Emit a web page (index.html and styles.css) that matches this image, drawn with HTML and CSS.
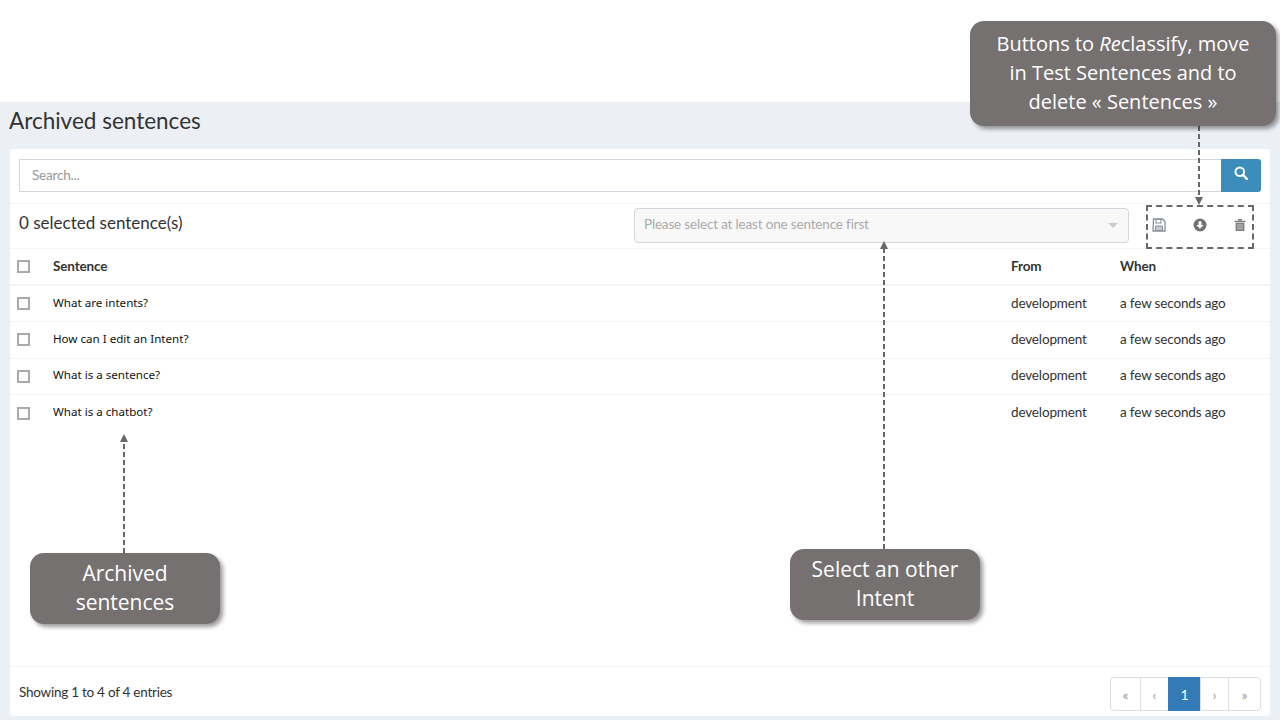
FILE: index.html
```html
<!DOCTYPE html>
<html lang="en">
  <head>
    <meta charset="UTF-8" />
    <title>Archived sentences</title>
    <link rel="stylesheet" href="styles.css">
  </head>
  <body>
    <div class="content">
      <h1>Archived sentences</h1>
      <div class="box">
        <div class="search-row">
          <input class="search-input" type="text" placeholder="Search..." />
          <button class="search-btn" type="button" aria-label="Search">
            <svg width="14" height="14" viewBox="0 0 14 14">
              <circle cx="5.8" cy="5.8" r="4.3" fill="none" stroke="#fff" stroke-width="2" />
              <path d="M9 9l4 4" stroke="#fff" stroke-width="2.4" stroke-linecap="round" />
            </svg>
          </button>
        </div>

        <div class="toolbar">
          <div class="selected-count">0 selected sentence(s)</div>
          <div class="intent-select">
            <span class="intent-text">Please select at least one sentence first</span>
            <i class="caret"></i>
          </div>
          <div class="actions">
            <svg width="14" height="14" viewBox="0 0 14 14">
              <path d="M1.5 1h9L13 3.5V13H1z" fill="none" stroke="#8a8f96" stroke-width="1.3" />
              <path d="M4 1.5h5v3.5H4z" fill="none" stroke="#8a8f96" stroke-width="1.1" />
              <path d="M3.5 8h7v4.5h-7z" fill="#c3cad6" stroke="#8a8f96" stroke-width="1" />
            </svg>
            <svg width="14" height="14" viewBox="0 0 14 14">
              <circle cx="7" cy="7" r="6.5" fill="#6f7275" />
              <path d="M5.6 3.2h2.8v3.7h2.2L7 10.8 3.4 6.9h2.2z" fill="#fff" />
            </svg>
            <svg width="14" height="14" viewBox="0 0 14 14">
              <path d="M1.5 2.8h11v1.4h-11zM5 1h4v1.5H5z" fill="#7d7f80" />
              <path d="M2.6 4.8h8.8V13H2.6z" fill="#7d7f80" />
              <path d="M5 6v5.8M7 6v5.8M9 6v5.8" stroke="#d8d4cc" stroke-width="0.9" />
            </svg>
          </div>
        </div>

        <table class="sentences">
          <thead>
            <tr>
              <th class="col-check"><i class="check"></i></th>
              <th class="col-sentence">Sentence</th>
              <th class="col-from">From</th>
              <th class="col-when">When</th>
            </tr>
          </thead>
          <tbody>
            <tr>
              <td><i class="check"></i></td>
              <td class="sentence">What are intents?</td>
              <td>development</td>
              <td>a few seconds ago</td>
            </tr>
            <tr>
              <td><i class="check"></i></td>
              <td class="sentence">How can I edit an Intent?</td>
              <td>development</td>
              <td>a few seconds ago</td>
            </tr>
            <tr>
              <td><i class="check"></i></td>
              <td class="sentence">What is a sentence?</td>
              <td>development</td>
              <td>a few seconds ago</td>
            </tr>
            <tr>
              <td><i class="check"></i></td>
              <td class="sentence">What is a chatbot?</td>
              <td>development</td>
              <td>a few seconds ago</td>
            </tr>
          </tbody>
        </table>

        <div class="box-footer">
          <div class="entries">Showing 1 to 4 of 4 entries</div>
          <ul class="pagination">
            <li>«</li>
            <li>‹</li>
            <li class="active">1</li>
            <li>›</li>
            <li>»</li>
          </ul>
        </div>
      </div>
    </div>

    <!-- annotations drawn over the page -->
    <svg class="connectors" width="1280" height="720">
      <path class="dash" d="M1199 126V198" />
      <path class="head" d="M1195 197h8l-4 8z" />
      <path class="dash" d="M884 549V248" />
      <path class="head" d="M880 249h8l-4-8z" />
      <path class="dash" d="M124 553V441" />
      <path class="head" d="M120 442h8l-4-8z" />
    </svg>
    <div class="dashed-frame"></div>
    <div class="callout callout-actions">Buttons to <em>Re</em>classify, move<br>in Test Sentences and to<br>delete « Sentences »</div>
    <div class="callout callout-intent">Select an other<br>Intent</div>
    <div class="callout callout-archived">Archived<br>sentences</div>
  </body>
</html>
```

FILE: styles.css
```css
html,
body {
  margin: 0;
  padding: 0;
  height: 720px;
  overflow: hidden;
  background-color: #fff;
}

body {
  font-family: Lato, "Liberation Sans", sans-serif;
  color: #333;
  position: relative;
}

.content {
  margin-top: 102px;
  height: 618px;
  background-color: #ecf0f5;
  padding: 0 10px;
  box-sizing: border-box;
}

h1 {
  margin: 0 0 0 -1px;
  height: 47px;
  line-height: 37px;
  font-size: 22.5px;
  font-weight: 400;
}

.box {
  background-color: #fff;
  height: 567px;
  border-radius: 3px;
  display: flex;
  flex-direction: column;
}

.search-row {
  display: flex;
  padding: 10px 9px 11px;
  border-bottom: 1px solid #f4f4f4;
}

.search-input {
  flex: 1;
  height: 33px;
  box-sizing: border-box;
  border: 1px solid #d2d6de;
  border-right: none;
  padding: 0 12px 2px;
  font-family: inherit;
  font-size: 13.5px;
  letter-spacing: -0.2px;
}

.search-input::placeholder {
  color: #999;
}

.search-btn {
  width: 40px;
  height: 33px;
  border: none;
  padding: 0 0 2px;
  background-color: #3c8dbc;
  border-radius: 0 3px 3px 0;
}

.toolbar {
  display: flex;
  align-items: center;
  height: 42px;
  padding: 0 0 2px 9px;
  border-bottom: 1px solid #f4f4f4;
}

.selected-count {
  width: 615px;
  font-size: 17px;
  padding-bottom: 6px;
}

.intent-select {
  width: 495px;
  height: 35px;
  box-sizing: border-box;
  border: 1px solid #d2d6de;
  border-radius: 4px;
  background-color: #f8f8f8;
  color: #aaa;
  font-size: 13.5px;
  padding: 0 10px 0 9px;
  display: flex;
  align-items: center;
  justify-content: space-between;
}

.intent-text {
  letter-spacing: -0.17px;
  padding-bottom: 2px;
}

.caret {
  width: 0;
  height: 0;
  border-left: 5px solid transparent;
  border-right: 5px solid transparent;
  border-top: 5px solid #ccc;
}

.actions {
  display: flex;
  justify-content: space-between;
  width: 95px;
  margin-left: 23px;
}

.sentences {
  width: 100%;
  border-collapse: collapse;
  table-layout: fixed;
  font-size: 13.5px;
  letter-spacing: -0.15px;
}

.sentences th {
  height: 36px;
  padding: 0 0 2px;
  box-sizing: border-box;
  text-align: left;
  font-weight: 700;
  font-size: 13.5px;
  border-bottom: 2px solid #f4f4f4;
}

.sentences td {
  height: 36.6px;
  box-sizing: border-box;
  padding: 0 0 2px;
  border-bottom: 1px solid #f4f4f4;
}

.sentences tbody tr:last-child td {
  border-bottom: none;
}

.col-check {
  width: 43px;
}

.col-sentence {
  width: 958px;
}

.col-from {
  width: 109px;
}

.check {
  display: block;
  width: 9px;
  height: 9px;
  margin: 2px 0 0 7px;
  border: 2px solid #aaa;
}

.sentences .sentence {
  font-family: "Noto Sans", "DejaVu Sans", sans-serif;
  font-size: 11.6px;
  letter-spacing: 0;
  color: #111;
  padding-bottom: 3px;
}

.box-footer {
  margin-top: auto;
  height: 49px;
  border-top: 1px solid #f4f4f4;
  padding: 0 9px;
  display: flex;
  align-items: flex-start;
  justify-content: space-between;
}

.entries {
  font-size: 13.5px;
  letter-spacing: -0.25px;
  margin-top: 17px;
}

.pagination {
  list-style: none;
  margin: 10px 0 0;
  padding: 0;
  display: flex;
  height: 34px;
  font-size: 14px;
}

.pagination li {
  width: 29px;
  box-sizing: border-box;
  border: 1px solid #ddd;
  margin-left: -1px;
  color: #999;
  display: flex;
  align-items: center;
  justify-content: center;
}

.pagination li:first-child {
  width: 31px;
  border-radius: 4px 0 0 4px;
  margin-left: 0;
}

.pagination li:last-child {
  width: 33px;
  border-radius: 0 4px 4px 0;
}

.pagination .active {
  width: 33px;
  background-color: #337ab7;
  border-color: #337ab7;
  color: #fff;
  font-weight: 400;
}

/* annotations */
.connectors {
  position: absolute;
  left: 0;
  top: 0;
}

.dash {
  fill: none;
  stroke: #6a6767;
  stroke-width: 2;
  stroke-dasharray: 5 3;
}

.head {
  fill: #6a6767;
}

.dashed-frame {
  position: absolute;
  left: 1146px;
  top: 205px;
  width: 104px;
  height: 40px;
  border: 2px dashed #6a6767;
}

.callout {
  position: absolute;
  box-sizing: border-box;
  background-color: #767171;
  color: #fff;
  border-radius: 14px;
  box-shadow: 3px 3px 4px rgba(0, 0, 0, 0.4);
  font-family: "Open Sans", sans-serif;
  font-size: 21px;
  line-height: 29px;
  text-align: center;
  white-space: nowrap;
}

.callout-actions {
  left: 970px;
  top: 21px;
  width: 306px;
  height: 105px;
  padding-top: 8px;
  font-size: 20px;
}

.callout-intent {
  left: 790px;
  top: 549px;
  width: 190px;
  height: 71px;
  padding-top: 6px;
}

.callout-archived {
  left: 30px;
  top: 553px;
  width: 190px;
  height: 71px;
  padding-top: 6px;
}
```
